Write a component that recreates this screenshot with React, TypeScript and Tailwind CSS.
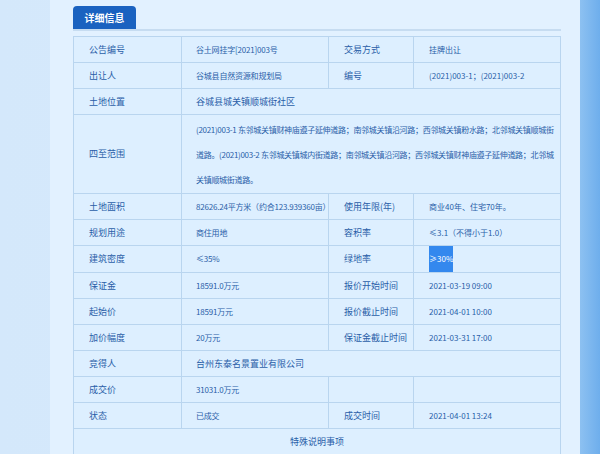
export default function App() {
  const c = "border border-[#b9d5ef] px-[8px] align-middle whitespace-nowrap overflow-hidden leading-[12px] p-0";
  const rows: [string, string, string?, string?][] = [
    ["公告编号", "谷土网挂字[2021]003号", "交易方式", "挂牌出让"],
    ["出让人", "谷城县自然资源和规划局", "编号", "(2021)003-1；(2021)003-2"],
  ];
  const rows2: [string, string, string, string][] = [
    ["土地面积", "82626.24平方米（约合123.939360亩）", "使用年限(年)", "商业40年、住宅70年。"],
    ["规划用途", "商住用地", "容积率", "≤3.1（不得小于1.0）"],
    ["建筑密度", "≤35%", "绿地率", "≥30%"],
    ["保证金", "18591.0万元", "报价开始时间", "2021-03-19 09:00"],
    ["起始价", "18591万元", "报价截止时间", "2021-04-01 10:00"],
    ["加价幅度", "20万元", "保证金截止时间", "2021-03-31 17:00"],
  ];
  const r = (a: string[], i: number) => (
    <tr key={i} className="h-[26px]">
      <td className={c + " pl-[15px]"}>{a[0]}</td>
      <td className={c + " pl-[14px] text-[8px] tracking-[-0.2px]"}>{a[1]}</td>
      <td className={c + " pl-[15px]"}>{a[2]}</td>
      <td className={c + " pl-[15px] text-[8px]"}>
        {a[3] === "≥30%" ? <span className="bg-[#3388ee] text-white inline-block leading-[26px] text-[8px]">≥30%</span> : a[3]}
      </td>
    </tr>
  );
  return (
    <div className="w-[600px] h-[454px] overflow-hidden bg-[linear-gradient(90deg,#d4e8fb_0%,#d8ebfc_85%,#9ccaf4_95%,#6eaeec_100%)] text-[9px] text-[#2a5ea8]" style={{ fontFamily: '"Noto Sans CJK SC", sans-serif' }}>
      <div className="ml-[50px] w-[530px] h-full bg-[#e2f1ff] pt-[6px] pl-[23px] pr-[19px]">
        <div className="border-b-2 border-[#c6dcf1] h-[25px]">
          <div className="w-[63px] h-[23px] bg-[#1a62c0] text-white rounded-t-[4px] text-[10px] font-bold flex items-center justify-center">详细信息</div>
        </div>
        <table className="mt-[5px] w-[488px] border-collapse bg-[#ddefff] table-fixed">
          <colgroup>
            <col className="w-[108px]" /><col className="w-[147px]" /><col className="w-[85px]" /><col />
          </colgroup>
          <tbody>
            {rows.map((a, i) => r(a as string[], i))}
            <tr className="h-[26px]">
              <td className={c + " pl-[15px]"}>土地位置</td>
              <td className={c + " pl-[14px]"} colSpan={3}>谷城县城关镇顺城街社区</td>
            </tr>
            <tr className="h-[79px]">
              <td className={c + " pl-[15px]"}>四至范围</td>
              <td className="border border-[#b9d5ef] pl-[14px] pr-[2px] leading-[25px] text-[8px] tracking-[-0.3px]" colSpan={3}>
                (2021)003-1 东邻城关镇财神庙遵子延伸道路；南邻城关镇沿河路；西邻城关镇粉水路；北邻城关镇顺城街道路。(2021)003-2 东邻城关镇城内街道路；南邻城关镇沿河路；西邻城关镇财神庙遵子延伸道路；北邻城关镇顺城街道路。
              </td>
            </tr>
            {rows2.map((a, i) => r(a, i + 10))}
            <tr className="h-[26px]">
              <td className={c + " pl-[15px]"}>竞得人</td>
              <td className={c + " pl-[14px]"} colSpan={3}>台州东泰名景置业有限公司</td>
            </tr>
            {r(["成交价", "31031.0万元", "", ""], 30)}
            {r(["状态", "已成交", "成交时间", "2021-04-01 13:24"], 31)}
            <tr className="h-[26px]">
              <td className={c + " text-center"} colSpan={4}>特殊说明事项</td>
            </tr>
          </tbody>
        </table>
      </div>
    </div>
  );
}
